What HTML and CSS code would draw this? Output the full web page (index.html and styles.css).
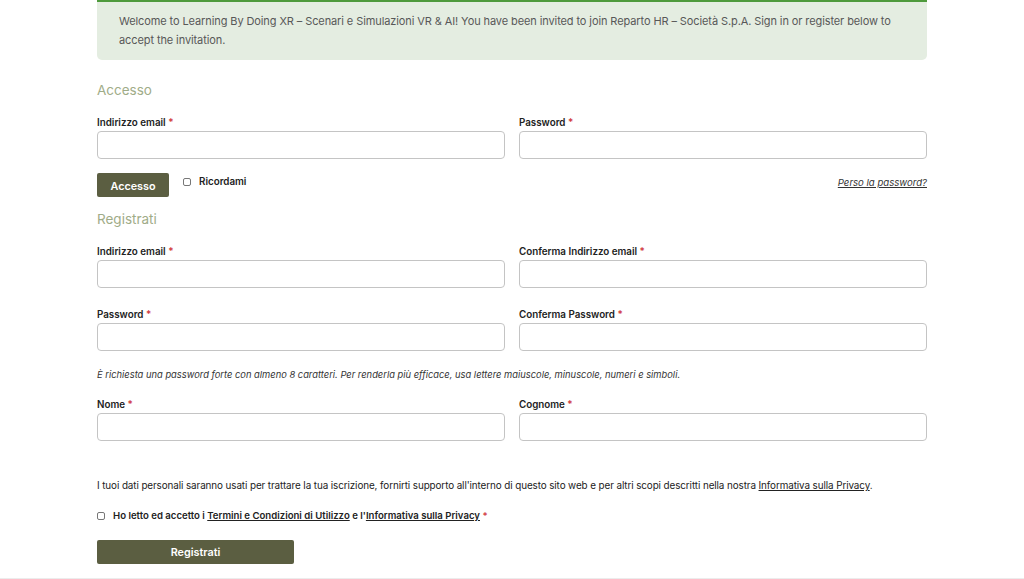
FILE: index.html
```html
<!DOCTYPE html>
<html lang="it">
<head>
  <meta charset="UTF-8">
  <meta name="viewport" content="width=device-width, initial-scale=1.0">
  <title>Accesso - Learning By Doing XR</title>
  <link rel="stylesheet" href="styles.css">
</head>
<body>
  <div class="page">
    <div class="notice">
      Welcome to Learning By Doing XR – Scenari e Simulazioni VR &amp; AI! You have been invited to join Reparto HR – Società S.p.A. Sign in or register below to accept the invitation.
    </div>

    <h2 class="section-title">Accesso</h2>
    <form class="login">
      <div class="row">
        <div class="field">
          <label>Indirizzo email <span class="req">*</span></label>
          <input type="text">
        </div>
        <div class="field">
          <label>Password <span class="req">*</span></label>
          <input type="password">
        </div>
      </div>
      <div class="login-actions">
        <button type="button" class="btn btn-small">Accesso</button>
        <label class="check"><input type="checkbox"><span>Ricordami</span></label>
        <a href="#" class="lost">Perso la password?</a>
      </div>
    </form>

    <h2 class="section-title section-reg">Registrati</h2>
    <form class="register">
      <div class="row">
        <div class="field">
          <label>Indirizzo email <span class="req">*</span></label>
          <input type="text">
        </div>
        <div class="field">
          <label>Conferma Indirizzo email <span class="req">*</span></label>
          <input type="text">
        </div>
      </div>
      <div class="row row-gap">
        <div class="field">
          <label>Password <span class="req">*</span></label>
          <input type="password">
        </div>
        <div class="field">
          <label>Conferma Password <span class="req">*</span></label>
          <input type="password">
        </div>
      </div>
      <p class="hint">È richiesta una password forte con almeno 8 caratteri. Per renderla più efficace, usa lettere maiuscole, minuscole, numeri e simboli.</p>
      <div class="row">
        <div class="field">
          <label>Nome <span class="req">*</span></label>
          <input type="text">
        </div>
        <div class="field">
          <label>Cognome <span class="req">*</span></label>
          <input type="text">
        </div>
      </div>
      <p class="privacy">I tuoi dati personali saranno usati per trattare la tua iscrizione, fornirti supporto all'interno di questo sito web e per altri scopi descritti nella nostra <a href="#">Informativa sulla Privacy</a>.</p>
      <label class="check terms"><input type="checkbox"><span>Ho letto ed accetto i <a href="#">Termini e Condizioni di Utilizzo</a> e l'<a href="#">Informativa sulla Privacy</a> <span class="req">*</span></span></label>
      <button type="button" class="btn btn-wide">Registrati</button>
    </form>
  </div>
</body>
</html>
```

FILE: styles.css
```css
body {
  font-family: Inter, "Noto Sans", sans-serif;
  background-color: #fff;
  color: #222;
  margin: 0;
  padding: 0;
  height: 579px;
  overflow: hidden;
}
.page {
  width: 830px;
  margin: 0 auto;
  height: 578px;
  box-sizing: border-box;
}
body::after {
  content: "";
  display: block;
  border-top: 1px solid #ececec;
}
.notice {
  background: #e4ede1;
  border-top: 2px solid #4e9a3c;
  border-radius: 0 0 5px 5px;
  padding: 10px 22px;
  font-size: 11px;
  line-height: 19px;
  letter-spacing: -0.1px;
  color: #585858;
}
.section-title {
  margin: 20px 0 15px 0;
  font-size: 13.5px;
  line-height: 20px;
  font-weight: 400;
  color: #9fac88;
}
.section-reg {
  margin-top: 12px;
}
.row {
  display: flex;
  gap: 14px;
}
.row-gap {
  margin-top: 19px;
}
.field {
  flex: 1;
  display: flex;
  flex-direction: column;
}
.field label {
  font-size: 9.8px;
  line-height: 14px;
  font-weight: 600;
  color: #222;
  padding-top: 1px;
  margin-bottom: 1px;
}
.req { color: #d0343a; }
.field input {
  height: 28px;
  box-sizing: border-box;
  border: 1px solid #c4c4c4;
  border-radius: 4px;
  background: #fff;
  margin: 0;
}
.login-actions {
  display: flex;
  align-items: flex-start;
  margin-top: 14px;
}
.btn {
  background: #5b5e41;
  color: #fff;
  border: none;
  border-radius: 2px;
  font-family: Inter, sans-serif;
  font-weight: 600;
  height: 24px;
  padding: 0;
  cursor: pointer;
}
.btn-small {
  width: 72px;
  font-size: 10.8px;
  padding-top: 2px;
}
.btn-wide {
  width: 197px;
  margin-top: 17px;
  font-size: 10.8px;
  display: block;
}
.check {
  display: flex;
  align-items: center;
  font-size: 9.8px;
  line-height: 14px;
  font-weight: 600;
  color: #222;
}
.login-actions .check {
  margin-left: 14px;
  margin-top: 2px;
}
.check input {
  appearance: none;
  flex: none;
  width: 8px;
  height: 8px;
  border: 1px solid #777;
  border-radius: 2px;
  margin: 0 8px 0 0;
  background: #fff;
}
.check a { color: #222; }
.lost {
  margin-left: auto;
  margin-top: 3px;
  font-size: 9.6px;
  line-height: 14px;
  font-style: italic;
  color: #333;
}
.hint {
  margin: 17px 0 15px 0;
  font-size: 9.35px;
  line-height: 14px;
  font-style: italic;
  color: #333;
}
.privacy {
  margin: 37px 0 17px 0;
  font-size: 9.9px;
  line-height: 14px;
  color: #222;
  letter-spacing: -0.1px;
}
.privacy a { color: #222; }
.terms {
  margin: 0;
  font-size: 9.6px;
}
```
